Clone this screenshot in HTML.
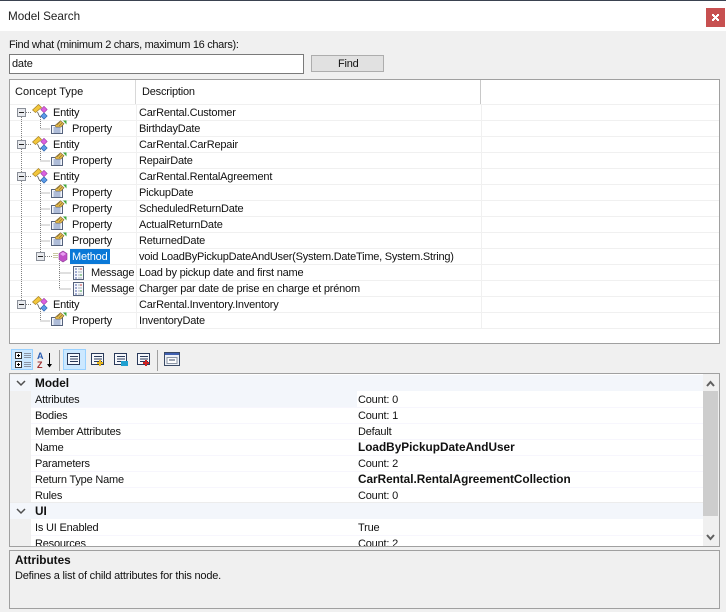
<!DOCTYPE html>
<html><head><meta charset="utf-8"><style>
html,body{margin:0;padding:0}
body{width:726px;height:612px;overflow:hidden;background:#f0f0f0;position:relative;font:11px/16px "Liberation Sans",sans-serif;letter-spacing:-.2px;color:#111}
div,span,svg{position:absolute}
.t{white-space:nowrap;line-height:16px}
.r{left:10px;width:709px;height:1px;background:#f0f0f0}
.b{font-weight:bold;font-size:11.8px;letter-spacing:0;margin-top:-1px}
</style></head><body>
<svg width="0" height="0"><defs>
<symbol id="ent" viewBox="0 0 16 16"><path d="M9 12.500H7.500L5.500 8" fill="none" stroke="#555" stroke-width=".8"/><path d="M.5 6 6.500 .5 9.500 3.500 3.500 8.500z" fill="#f2c63c" stroke="#a8842a" stroke-width=".7"/><path d="M12 2.300l3.200 3.200-3.200 3.200-3.200-3.200z" fill="#dc62e0" stroke="#9a3aa2" stroke-width=".6"/><path d="M12 8.800l3.200 3.200-3.200 3.200-3.200-3.200z" fill="#5a9ae8" stroke="#2860a8" stroke-width=".6"/></symbol>
<symbol id="prop" viewBox="0 0 16 16"><path d="M.5 5.500h11v8h-11z" fill="#f2f5fb" stroke="#55627c"/><path d="M2.500 8h7M2.500 10h7M2.500 12h7" stroke="#6a84b4"/><path d="M4 5.500 9.500 .8 13 3.800 10 7H5z" fill="#e6bc4c" stroke="#7a6030" stroke-width=".6"/><path d="M6 5l3-3M8 6l3-3" stroke="#8a7030" stroke-width=".6"/><path d="M12 .5h3.500v4z" fill="#3ea83e"/></symbol>
<symbol id="msg" viewBox="0 0 13 16"><path d="M1.500 1.500h10v13h-10z" fill="#f6f8fc" stroke="#55627c"/><path d="M3 4h2M3 7h2M3 10h2M3 13h2" stroke="#5060a8"/><path d="M6 4h4M6 7h4M6 10h4M6 13h4" stroke="#a8b4bc"/><path d="M8 4h2" stroke="#d04040"/><path d="M8 10h2" stroke="#40a040"/></symbol>
<symbol id="minus" viewBox="0 0 9 9"><rect x=".5" y=".5" width="8" height="8" fill="#e8eaee" stroke="#8a8f98"/><path d="M2 4.500h5" stroke="#222"/></symbol>
<symbol id="tb" viewBox="0 0 16 16"><path d="M1.500 2.500h12v11h-12z" fill="#f6f8fc" stroke="#2a3a5a"/><path d="M4 5.500h8M4 8h8M4 10.500h8" stroke="#2a3a5a"/></symbol>
</defs></svg>

<div style="left:0;top:0;width:726px;height:1px;background:#3a4250"></div>
<div style="left:0;top:1px;width:726px;height:30px;background:#fff"></div>
<div class="t" style="left:8px;top:8px;font-size:11.7px;letter-spacing:0;color:#222;line-height:17px">Model Search</div>
<div style="left:706px;top:8px;width:19px;height:19px;background:#c75050"></div>
<svg style="left:712px;top:14px" width="7" height="7" viewBox="0 0 7 7" shape-rendering="crispEdges"><path d="M0 0h2v1h1v1h1V1h1V0h2v2H6v1H5v1h1v1h1v2H5V6H4V5H3v1H2v1H0V5h1V4h1V3H1V2H0z" fill="#fff"/></svg>

<div class="t" style="left:9px;top:37px;letter-spacing:-.31px">Find what (minimum 2 chars, maximum 16 chars):</div>
<div style="left:9px;top:54px;border:1px solid #7a7a7a;background:#fff;width:293px;height:18px"></div>
<div class="t" style="left:12px;top:56px">date</div>
<div style="left:311px;top:55px;width:71px;height:15px;border:1px solid #adadad;background:#e1e1e1"></div>
<div class="t" style="left:338px;top:56px">Find</div>

<!-- tree -->
<div style="left:9px;top:79px;width:709px;height:263px;border:1px solid #a0a0a0;background:#fff"></div>
<div style="left:135px;top:80px;width:1px;height:24px;background:#d8d8d8"></div>
<div style="left:480px;top:80px;width:1px;height:24px;background:#c8c8c8"></div>
<div class="t" style="left:15px;top:84px;letter-spacing:.05px">Concept Type</div>
<div class="t" style="left:142px;top:84px">Description</div>
<div class="r" style="top:104px"></div><div class="r" style="top:120px"></div><div class="r" style="top:136px"></div><div class="r" style="top:152px"></div><div class="r" style="top:168px"></div><div class="r" style="top:184px"></div><div class="r" style="top:200px"></div><div class="r" style="top:216px"></div><div class="r" style="top:232px"></div><div class="r" style="top:248px"></div><div class="r" style="top:264px"></div><div class="r" style="top:280px"></div><div class="r" style="top:296px"></div><div class="r" style="top:312px"></div><div class="r" style="top:328px"></div>
<div style="left:136px;top:104px;width:1px;height:224px;background:#f0f0f0"></div>
<div style="left:481px;top:104px;width:1px;height:224px;background:#f0f0f0"></div>

<!-- tree lines -->
<svg style="left:0;top:100px" width="140" height="240" fill="none" stroke="#808080" stroke-dasharray="1 1" shape-rendering="crispEdges"><path d="M21.500 17v24M21.500 49v24M21.500 81v120"/><path d="M26 12.500h6M26 44.500h6M26 76.500h6M26 204.500h6"/><path d="M40.500 17v12h10M40.500 49v12h10M40.500 81v12h10M40.500 93v16h10M40.500 109v16h10M40.500 125v16h10M40.500 141v11M40.500 209v12h10"/><path d="M45 156.500h8M59.500 161v12h12M59.500 173v16h12"/></svg>

<svg style="left:17px;top:108px" width="9" height="9"><use href="#minus"/></svg>
<svg style="left:17px;top:140px" width="9" height="9"><use href="#minus"/></svg>
<svg style="left:17px;top:172px" width="9" height="9"><use href="#minus"/></svg>
<svg style="left:36px;top:252px" width="9" height="9"><use href="#minus"/></svg>
<svg style="left:17px;top:300px" width="9" height="9"><use href="#minus"/></svg>

<svg style="left:32px;top:104px" width="16" height="16"><use href="#ent"/></svg>
<svg style="left:32px;top:136px" width="16" height="16"><use href="#ent"/></svg>
<svg style="left:32px;top:168px" width="16" height="16"><use href="#ent"/></svg>
<svg style="left:32px;top:296px" width="16" height="16"><use href="#ent"/></svg>

<svg style="left:51px;top:120px" width="16" height="16"><use href="#prop"/></svg>
<svg style="left:51px;top:152px" width="16" height="16"><use href="#prop"/></svg>
<svg style="left:51px;top:184px" width="16" height="16"><use href="#prop"/></svg>
<svg style="left:51px;top:200px" width="16" height="16"><use href="#prop"/></svg>
<svg style="left:51px;top:216px" width="16" height="16"><use href="#prop"/></svg>
<svg style="left:51px;top:232px" width="16" height="16"><use href="#prop"/></svg>
<svg style="left:51px;top:312px" width="16" height="16"><use href="#prop"/></svg>

<svg style="left:53px;top:250px" width="15" height="14" viewBox="0 0 15 14"><path d="M0 3.500h5M0 5.500h5M0 7.500h5" stroke="#c8c8a0"/><path d="M10 1l4 2.500v6L10 12 6 9.500v-6z" fill="#c050c8" stroke="#904098" stroke-width=".6"/><path d="M7 4l3-2 3 2-3 2z" fill="#e8a0f0"/></svg>
<svg style="left:72px;top:265px" width="13" height="16"><use href="#msg"/></svg>
<svg style="left:72px;top:281px" width="13" height="16"><use href="#msg"/></svg>

<div class="t" style="left:53px;top:105px">Entity</div>
<div class="t" style="left:72px;top:121px">Property</div>
<div class="t" style="left:53px;top:137px">Entity</div>
<div class="t" style="left:72px;top:153px">Property</div>
<div class="t" style="left:53px;top:169px">Entity</div>
<div class="t" style="left:72px;top:185px">Property</div>
<div class="t" style="left:72px;top:201px">Property</div>
<div class="t" style="left:72px;top:217px">Property</div>
<div class="t" style="left:72px;top:233px">Property</div>
<div style="left:70px;top:249px;width:40px;height:15px;background:#0a78d7"></div>
<div class="t" style="left:72px;top:249px;color:#fff">Method</div>
<div class="t" style="left:91px;top:265px">Message</div>
<div class="t" style="left:91px;top:281px">Message</div>
<div class="t" style="left:53px;top:297px">Entity</div>
<div class="t" style="left:72px;top:313px">Property</div>

<div class="t" style="left:139px;top:105px">CarRental.Customer</div>
<div class="t" style="left:139px;top:121px">BirthdayDate</div>
<div class="t" style="left:139px;top:137px">CarRental.CarRepair</div>
<div class="t" style="left:139px;top:153px">RepairDate</div>
<div class="t" style="left:139px;top:169px">CarRental.RentalAgreement</div>
<div class="t" style="left:139px;top:185px">PickupDate</div>
<div class="t" style="left:139px;top:201px">ScheduledReturnDate</div>
<div class="t" style="left:139px;top:217px">ActualReturnDate</div>
<div class="t" style="left:139px;top:233px">ReturnedDate</div>
<div class="t" style="left:139px;top:249px;letter-spacing:-.23px">void LoadByPickupDateAndUser(System.DateTime, System.String)</div>
<div class="t" style="left:139px;top:265px">Load by pickup date and first name</div>
<div class="t" style="left:139px;top:281px">Charger par date de prise en charge et prénom</div>
<div class="t" style="left:139px;top:297px">CarRental.Inventory.Inventory</div>
<div class="t" style="left:139px;top:313px">InventoryDate</div>

<!-- toolbar -->
<div style="left:11px;top:349px;width:20px;height:19px;border:1px solid #99d1ff;background:#cce8ff"></div>
<svg style="left:14px;top:351px" width="18" height="18" viewBox="0 0 18 18"><rect x="1.500" y="1.500" width="6" height="6" fill="#fff" stroke="#333"/><path d="M3 4.500h3M4.500 3v3" stroke="#000"/><rect x="1.500" y="10.500" width="6" height="6" fill="#fff" stroke="#333"/><path d="M3 13.500h3M4.500 12v3" stroke="#000"/><path d="M10 2.500h7M10 4.500h7M10 6.500h7M10 11.500h7M10 13.500h7M10 15.500h7" stroke="#8a94a4"/></svg>
<svg style="left:36px;top:351px" width="18" height="19" viewBox="0 0 18 19"><text x="1" y="8" font-family="Liberation Sans" font-size="9" font-weight="bold" fill="#2a5cb0">A</text><text x="1" y="17" font-family="Liberation Sans" font-size="9" font-weight="bold" fill="#a03030">Z</text><path d="M13.500 2v13" stroke="#000"/><path d="M11 13l2.500 3.500L16 13z" fill="#000"/></svg>
<div style="left:59px;top:350px;width:1px;height:21px;background:#a0a0a0"></div>
<div style="left:63px;top:349px;width:21px;height:19px;border:1px solid #99d1ff;background:#cce8ff"></div>
<svg style="left:66px;top:351px" width="16" height="16"><use href="#tb"/></svg>
<svg style="left:90px;top:351px" width="16" height="16"><use href="#tb"/><path d="M10 9v6M7 12h6" stroke="#e8b820" stroke-width="2"/></svg>
<svg style="left:113px;top:351px" width="16" height="16"><use href="#tb"/><path d="M8 10h7v5H8z" fill="#20a0d0"/></svg>
<svg style="left:136px;top:351px" width="16" height="16"><use href="#tb"/><path d="M10 9v6M7 12h6" stroke="#d02020" stroke-width="2"/></svg>
<div style="left:157px;top:350px;width:1px;height:21px;background:#a0a0a0"></div>
<svg style="left:164px;top:351px" width="16" height="16" viewBox="0 0 16 16"><path d="M.5 1.500h15v13H.5z" fill="#eef2f8" stroke="#3a4a66"/><path d="M1 2h14v2H1z" fill="#4060b0"/><path d="M3 6.500h10v6H3z" fill="#fff" stroke="#8a94a4"/><path d="M5 9h6" stroke="#3a4a66"/></svg>

<!-- grid -->
<div style="left:9px;top:373px;width:709px;height:172px;border:1px solid #a0a0a0;background:#fff;overflow:hidden">
<div style="left:0;top:0;width:21px;height:172px;background:#f0f0f0"></div>
<div style="left:0;top:1px;width:693px;height:16px;background:#f3f6fb"></div>
<div style="left:21px;top:17px;width:326px;height:16px;background:#f3f6fb"></div>
<div style="left:0;top:129px;width:693px;height:16px;background:#f3f6fb"></div>
<div style="left:21px;top:33px;width:672px;height:1px;background:#f7f6fd"></div>
<div style="left:21px;top:49px;width:672px;height:1px;background:#f7f6fd"></div>
<div style="left:21px;top:65px;width:672px;height:1px;background:#f7f6fd"></div>
<div style="left:21px;top:81px;width:672px;height:1px;background:#f7f6fd"></div>
<div style="left:21px;top:97px;width:672px;height:1px;background:#f7f6fd"></div>
<div style="left:21px;top:113px;width:672px;height:1px;background:#f7f6fd"></div>
<div style="left:0;top:128px;width:693px;height:1px;background:#ececec"></div>
<div style="left:21px;top:161px;width:672px;height:1px;background:#f7f6fd"></div>
<div style="left:693px;top:0;width:16px;height:172px;background:#f0f0f0"></div>
<div style="left:693px;top:17px;width:15px;height:125px;background:#cdcdcd"></div>
<svg style="left:696px;top:6px" width="9" height="7" viewBox="0 0 9 7"><path d="M1 6l3.500-4L8 6" fill="none" stroke="#606060" stroke-width="2"/></svg>
<svg style="left:696px;top:160px" width="9" height="7" viewBox="0 0 9 7"><path d="M1 1l3.500 4L8 1" fill="none" stroke="#606060" stroke-width="2"/></svg>
<svg style="left:6px;top:6px" width="10" height="7" viewBox="0 0 10 7"><path d="M1 1l4 4 4-4" fill="none" stroke="#505050" stroke-width="1.500"/></svg>
<svg style="left:6px;top:134px" width="10" height="7" viewBox="0 0 10 7"><path d="M1 1l4 4 4-4" fill="none" stroke="#505050" stroke-width="1.500"/></svg>
<div class="t b" style="left:25px;top:2px">Model</div>
<div class="t" style="left:25px;top:18px">Attributes</div>
<div class="t" style="left:25px;top:34px">Bodies</div>
<div class="t" style="left:25px;top:50px">Member Attributes</div>
<div class="t" style="left:25px;top:66px">Name</div>
<div class="t" style="left:25px;top:82px">Parameters</div>
<div class="t" style="left:25px;top:98px">Return Type Name</div>
<div class="t" style="left:25px;top:114px">Rules</div>
<div class="t b" style="left:25px;top:130px">UI</div>
<div class="t" style="left:25px;top:146px">Is UI Enabled</div>
<div class="t" style="left:25px;top:162px">Resources</div>
<div class="t" style="left:348px;top:18px">Count: 0</div>
<div class="t" style="left:348px;top:34px">Count: 1</div>
<div class="t" style="left:348px;top:50px">Default</div>
<div class="t b" style="left:348px;top:66px">LoadByPickupDateAndUser</div>
<div class="t" style="left:348px;top:82px">Count: 2</div>
<div class="t b" style="left:348px;top:98px;letter-spacing:-.03px">CarRental.RentalAgreementCollection</div>
<div class="t" style="left:348px;top:114px">Count: 0</div>
<div class="t" style="left:348px;top:146px">True</div>
<div class="t" style="left:348px;top:162px">Count: 2</div>
</div>

<!-- help -->
<div style="left:9px;top:550px;width:709px;height:57px;border:1px solid #a0a0a0;background:#f0f0f0"></div>
<div class="t b" style="left:15px;top:553px">Attributes</div>
<div class="t" style="left:15px;top:568px">Defines a list of child attributes for this node.</div>
</body></html>
